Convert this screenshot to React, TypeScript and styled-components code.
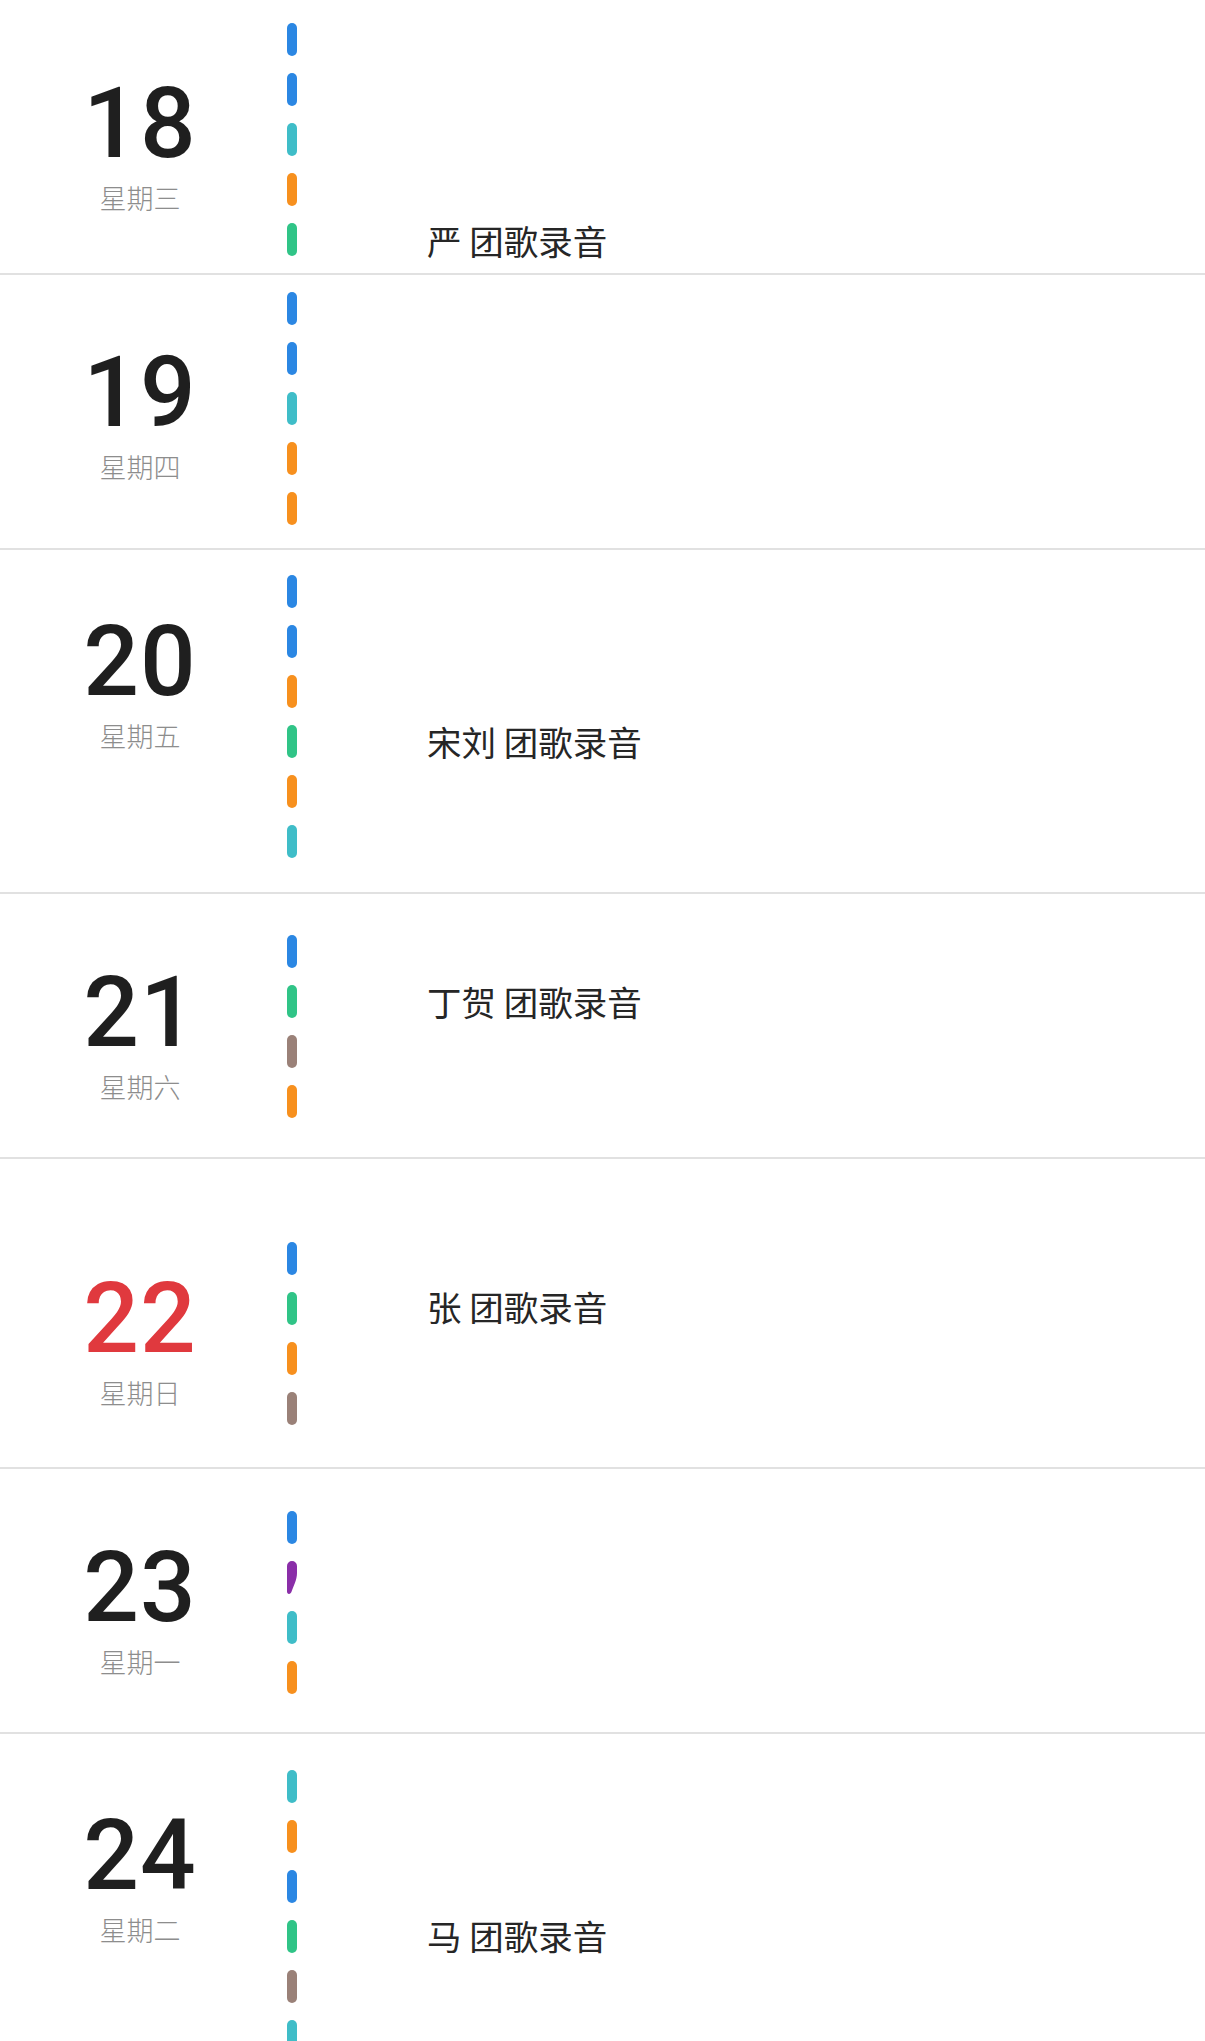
import styled, { createGlobalStyle } from 'styled-components';

const GlobalStyle = createGlobalStyle`
  html, body {
    margin: 0;
    padding: 0;
    background: #fff;
  }
  body {
    font-family: "Noto Sans CJK SC", "Noto Sans", sans-serif;
  }
`;

const colors = {
  blue: '#2b87e3',
  teal: '#3fbdc8',
  orange: '#f7901e',
  green: '#30c487',
  brown: '#9a8178',
  purple: '#8a2ea8',
};

type PillColor = keyof typeof colors;

const Page = styled.div`
  width: 1205px;
  height: 2041px;
  overflow: hidden;
  background: #fff;
`;

const DayRow = styled.div<{ $height?: number }>`
  display: flex;
  box-sizing: border-box;
  height: ${({ $height }) => ($height ? `${$height}px` : 'auto')};
  border-bottom: ${({ $height }) => ($height ? '2px solid #e1e1e1' : 'none')};
`;

const DateCol = styled.div<{ $top: number }>`
  width: 280px;
  flex-shrink: 0;
  display: flex;
  flex-direction: column;
  align-items: center;
  padding-top: ${({ $top }) => $top}px;
`;

const DayNumber = styled.div<{ $holiday?: boolean }>`
  font-family: Roboto, "Liberation Sans", sans-serif;
  font-weight: 500;
  font-size: 98px;
  line-height: 1;
  letter-spacing: 1px;
  color: ${({ $holiday }) => ($holiday ? '#e0393e' : '#1f1f1f')};
`;

const Weekday = styled.div`
  margin-top: 11px;
  font-size: 27px;
  font-weight: 300;
  line-height: 1;
  color: #8d8d8d;
`;

const Timeline = styled.div<{ $top: number }>`
  width: 10px;
  margin-left: 7px;
  flex-shrink: 0;
  display: flex;
  flex-direction: column;
  gap: 17px;
  padding-top: ${({ $top }) => $top}px;
`;

const Pill = styled.div<{ $color: PillColor }>`
  width: 10px;
  height: 33px;
  border-radius: 5px;
  background: ${({ $color }) => colors[$color]};
`;

const ClippedPill = styled.svg`
  display: block;
  width: 10px;
  height: 33px;
`;

const EventCol = styled.div<{ $top: number }>`
  margin-left: 130px;
  padding-top: ${({ $top }) => $top}px;
`;

const EventTitle = styled.div`
  font-size: 34.5px;
  line-height: 1;
  color: #262626;
  white-space: pre;
`;

type Day = {
  day: number;
  weekday: string;
  height?: number;
  dateTop: number;
  pillTop: number;
  pills: (PillColor | 'clipped')[];
  title?: string;
  titleTop?: number;
  holiday?: boolean;
};

const days: Day[] = [
  { day: 18, weekday: '星期三', height: 275, dateTop: 75, pillTop: 23, pills: ['blue', 'blue', 'teal', 'orange', 'green'], title: '严 团歌录音', titleTop: 223 },
  { day: 19, weekday: '星期四', height: 275, dateTop: 69, pillTop: 17, pills: ['blue', 'blue', 'teal', 'orange', 'orange'] },
  { day: 20, weekday: '星期五', height: 344, dateTop: 63, pillTop: 25, pills: ['blue', 'blue', 'orange', 'green', 'orange', 'teal'], title: '宋刘 团歌录音', titleTop: 174 },
  { day: 21, weekday: '星期六', height: 265, dateTop: 70, pillTop: 41, pills: ['blue', 'green', 'brown', 'orange'], title: '丁贺 团歌录音', titleTop: 90 },
  { day: 22, weekday: '星期日', height: 310, dateTop: 111, pillTop: 83, pills: ['blue', 'green', 'orange', 'brown'], title: '张 团歌录音', titleTop: 130, holiday: true },
  { day: 23, weekday: '星期一', height: 265, dateTop: 70, pillTop: 42, pills: ['blue', 'clipped', 'teal', 'orange'] },
  { day: 24, weekday: '星期二', dateTop: 73, pillTop: 36, pills: ['teal', 'orange', 'blue', 'green', 'brown', 'teal'], title: '马 团歌录音', titleTop: 184 },
];

const PurpleStub = () => (
  <ClippedPill viewBox="0 0 10 33">
    <path
      d="M0 5 A5 5 0 0 1 10 5 L10 12 C10 19 6.5 25 4.6 30.6 C4.1 32.2 3.1 33 2 33 C0.8 33 0 32 0 30.6 Z"
      fill={colors.purple}
    />
  </ClippedPill>
);

export default function App() {
  return (
    <Page>
      <GlobalStyle />
      {days.map((d) => (
        <DayRow key={d.day} $height={d.height}>
          <DateCol $top={d.dateTop}>
            <DayNumber $holiday={d.holiday}>{d.day}</DayNumber>
            <Weekday>{d.weekday}</Weekday>
          </DateCol>
          <Timeline $top={d.pillTop}>
            {d.pills.map((p, i) =>
              p === 'clipped' ? <PurpleStub key={i} /> : <Pill key={i} $color={p} />
            )}
          </Timeline>
          {d.title && (
            <EventCol $top={d.titleTop ?? 0}>
              <EventTitle>{d.title}</EventTitle>
            </EventCol>
          )}
        </DayRow>
      ))}
    </Page>
  );
}
